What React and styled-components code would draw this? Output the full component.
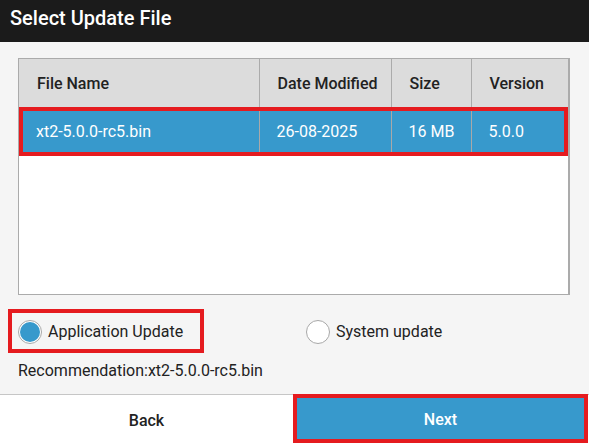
import React, { useState } from "react";
import styled, { createGlobalStyle } from "styled-components";

const GlobalStyle = createGlobalStyle`
  html, body {
    margin: 0;
    padding: 0;
    background: #f5f5f5;
    font-family: Roboto, "Liberation Sans", Arial, sans-serif;
  }
`;

const Screen = styled.div`
  width: 589px;
  height: 443px;
  display: flex;
  flex-direction: column;
  background: #f5f5f5;
  overflow: hidden;
`;

const Header = styled.header`
  height: 42px;
  flex: none;
  background: #1b1b1b;
  color: #ffffff;
  display: flex;
  align-items: center;
  padding: 0 10px 6px;
  box-sizing: border-box;
  font-size: 20px;
  font-weight: 500;
`;

const Body = styled.main`
  flex: 1;
  padding: 16px 19px 0 18px;
  display: flex;
  flex-direction: column;
`;

const TableBox = styled.div`
  height: 237px;
  background: #ffffff;
  border: 1px solid #ababab;
  border-right-width: 2px;
  box-sizing: border-box;
`;

const Table = styled.table`
  width: 100%;
  border-collapse: collapse;
  table-layout: fixed;
  font-size: 16px;
`;

const Th = styled.th`
  height: 47px;
  background: #dcdcdc;
  color: #222222;
  font-weight: 500;
  text-align: left;
  padding: 1px 0 0 18px;
  border-left: 1px solid #ababab;
  &:first-child {
    border-left: none;
  }
`;

const Row = styled.tr`
  background: ${(p) => (p.$selected ? "#3799cc" : "transparent")};
  color: ${(p) => (p.$selected ? "#ffffff" : "#222222")};
  outline: ${(p) => (p.$selected ? "4px solid #e51b1f" : "none")};
  outline-offset: -4px;
`;

const Td = styled.td`
  height: 49px;
  padding: 0 0 0 17px;
  font-weight: 400;
  border-left: 1px solid #a9a9a9;
  &:first-child {
    border-left: none;
  }
`;

const Options = styled.div`
  display: grid;
  grid-template-columns: 288px 1fr;
  margin-top: 14px;
  height: 44px;
  align-items: center;
`;

const RadioLabel = styled.label`
  display: flex;
  align-items: center;
  gap: 6px;
  font-size: 16px;
  font-weight: 400;
  color: #222222;
  cursor: pointer;
  height: 44px;
  padding-top: 1px;
  outline: ${(p) => (p.$active ? "4px solid #e51b1f" : "none")};
  outline-offset: -4px;
  margin-left: ${(p) => (p.$active ? "-10px" : "0")};
  padding-left: ${(p) => (p.$active ? "10px" : "0")};
  width: ${(p) => (p.$active ? "196px" : "auto")};
  box-sizing: border-box;
`;

const Dot = styled.span`
  width: 24px;
  height: 24px;
  border-radius: 50%;
  border: 1px solid #a8a8a8;
  background: #ffffff;
  box-sizing: border-box;
  display: flex;
  align-items: center;
  justify-content: center;
  flex: none;
  &::after {
    content: "";
    width: 20px;
    height: 20px;
    border-radius: 50%;
    background: ${(p) => (p.$checked ? "#3799cc" : "transparent")};
  }
`;

const Recommendation = styled.div`
  margin-top: 8px;
  font-size: 16px;
  color: #222222;
`;

const Footer = styled.footer`
  height: 48px;
  flex: none;
  display: grid;
  grid-template-columns: 293px 1fr;
  border-top: 1px solid #c6c6c6;
  background: #ffffff;
`;

const Button = styled.button`
  border: none;
  margin: 0;
  padding-top: 3px;
  font-family: inherit;
  font-size: 16px;
  font-weight: 500;
  background: ${(p) => (p.$primary ? "#3799cc" : "#ffffff")};
  color: ${(p) => (p.$primary ? "#ffffff" : "#222222")};
  outline: ${(p) => (p.$primary ? "4px solid #e51b1f" : "none")};
  outline-offset: -4px;
  margin-top: ${(p) => (p.$primary ? "-1px" : "0")};
  margin-right: ${(p) => (p.$primary ? "1px" : "0")};
  cursor: pointer;
`;

const files = [
  { name: "xt2-5.0.0-rc5.bin", date: "26-08-2025", size: "16 MB", version: "5.0.0" },
];

export default function App() {
  const [mode, setMode] = useState("app");

  return (
    <Screen>
      <GlobalStyle />
      <Header>Select Update File</Header>
      <Body>
        <TableBox>
          <Table>
            <colgroup>
              <col style={{ width: 240 }} />
              <col style={{ width: 132 }} />
              <col style={{ width: 80 }} />
              <col />
            </colgroup>
            <thead>
              <tr>
                <Th>File Name</Th>
                <Th>Date Modified</Th>
                <Th>Size</Th>
                <Th>Version</Th>
              </tr>
            </thead>
            <tbody>
              {files.map((f) => (
                <Row key={f.name} $selected>
                  <Td>{f.name}</Td>
                  <Td>{f.date}</Td>
                  <Td>{f.size}</Td>
                  <Td>{f.version}</Td>
                </Row>
              ))}
            </tbody>
          </Table>
        </TableBox>

        <Options>
          <RadioLabel $active={mode === "app"} onClick={() => setMode("app")}>
            <Dot $checked={mode === "app"} />
            Application Update
          </RadioLabel>
          <RadioLabel onClick={() => setMode("system")}>
            <Dot $checked={mode === "system"} />
            System update
          </RadioLabel>
        </Options>

        <Recommendation>Recommendation:xt2-5.0.0-rc5.bin</Recommendation>
      </Body>
      <Footer>
        <Button>Back</Button>
        <Button $primary>Next</Button>
      </Footer>
    </Screen>
  );
}
